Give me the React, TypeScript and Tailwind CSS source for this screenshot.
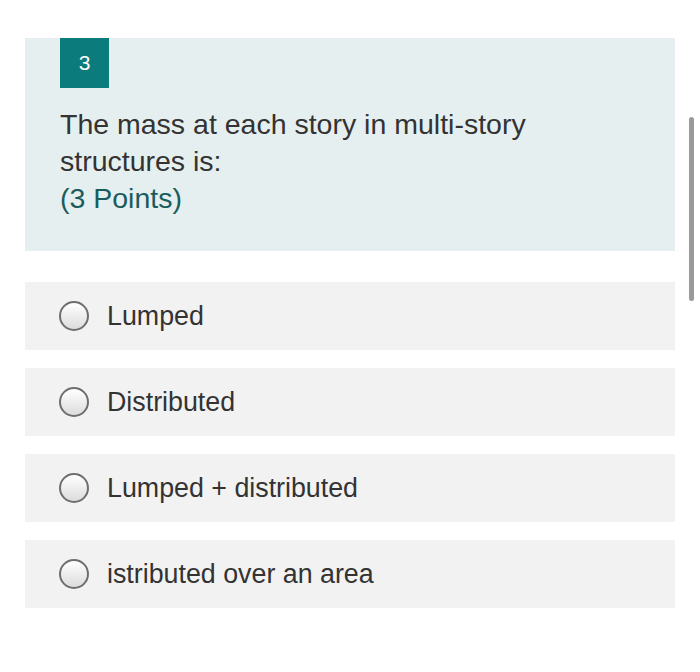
export default function App() {
  const options = ['Lumped', 'Distributed', 'Lumped + distributed', 'istributed over an area'];
  return (
    <div className="relative h-[672px] w-[700px] bg-white pt-[38px] font-['Liberation_Sans',Arial,sans-serif]">
      <div className="mx-[25px] h-[213px] bg-[#e6eff0] px-[35px]">
        <div className="flex h-[50px] w-[49px] items-center justify-center bg-[#0b7b7c] text-[21px] text-white">3</div>
        <div className="mt-[18px] text-[28.5px] leading-[37px] text-[#333333]">
          The mass at each story in multi-story
          <br />
          structures is:
          <br />
          <span className="text-[#1a5c5d]">(3 Points)</span>
        </div>
      </div>
      <div className="mx-[25px] mt-[31px] flex flex-col gap-[18px]">
        {options.map((o) => (
          <div key={o} className="flex h-[68px] items-center bg-[#f2f2f2] pl-[34px]">
            <div className="h-[30px] w-[30px] rounded-full border-2 border-[#6e6e6e] bg-gradient-to-b from-white to-[#dcdcdc]" />
            <span className="ml-[18px] text-[26.8px] text-[#333333]">{o}</span>
          </div>
        ))}
      </div>
      <div className="absolute left-[689px] top-[117px] h-[184px] w-[5px] rounded-full bg-[#9a9a9a]" />
    </div>
  );
}
